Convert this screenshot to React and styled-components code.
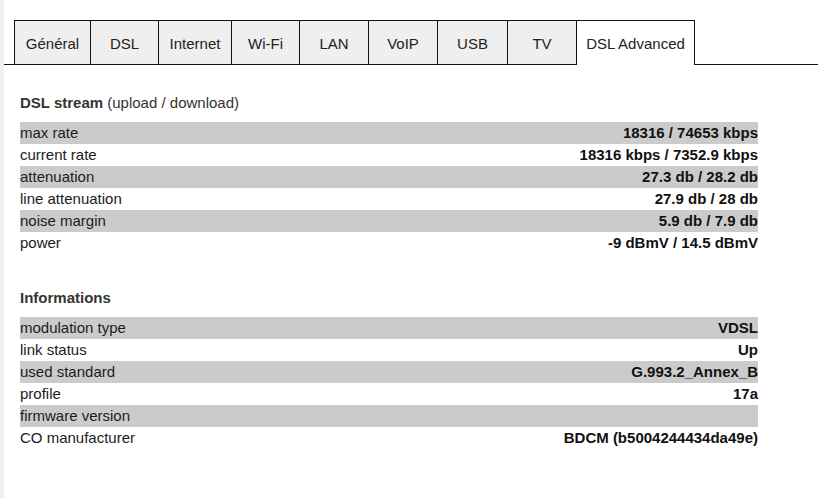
import React from 'react';
import styled, { createGlobalStyle } from 'styled-components';

const GlobalStyle = createGlobalStyle`
  body {
    margin: 0;
    background: #ffffff;
    font-family: "Liberation Sans", Arial, Helvetica, sans-serif;
    color: #1c1c1c;
  }
`;

const Page = styled.div`
  min-height: 499px;
  box-sizing: border-box;
  border-left: 4px solid #f1f1f1;
  padding-top: 20px;
`;

const TabBar = styled.div`
  display: flex;
  padding-left: 10px;
  border-bottom: 1px solid #111;
`;

const Tab = styled.div`
  box-sizing: border-box;
  width: ${(p) => p.w}px;
  height: ${(p) => (p.active ? '45px' : '44px')};
  margin-bottom: ${(p) => (p.active ? '-1px' : '0')};
  padding-top: 1px;
  display: flex;
  align-items: center;
  justify-content: center;
  border-top: 1px solid #111;
  border-right: 1px solid #111;
  border-left: ${(p) => (p.first ? '1px solid #111' : 'none')};
  background: ${(p) => (p.active ? '#ffffff' : '#efefef')};
  font-size: 15px;
  color: #222;
  white-space: nowrap;
`;

const Content = styled.div`
  width: 738px;
  padding-left: 16px;
`;

const Heading = styled.div`
  font-size: 15px;
  line-height: 18px;
  color: #333;
  margin: ${(p) => p.top}px 0 10px;

  b {
    font-weight: bold;
  }
`;

const Row = styled.div`
  display: flex;
  justify-content: space-between;
  height: 22px;
  line-height: 22px;
  font-size: 15px;
  background: ${(p) => (p.shaded ? '#cbcbcb' : 'transparent')};
`;

const Value = styled.span`
  font-weight: bold;
  color: #111;
`;

const tabs = [
  ['Général', 77],
  ['DSL', 68],
  ['Internet', 73],
  ['Wi-Fi', 68],
  ['LAN', 69],
  ['VoIP', 69],
  ['USB', 70],
  ['TV', 69],
  ['DSL Advanced', 118],
];

const stream = [
  ['max rate', '18316 / 74653 kbps'],
  ['current rate', '18316 kbps / 7352.9 kbps'],
  ['attenuation', '27.3 db / 28.2 db'],
  ['line attenuation', '27.9 db / 28 db'],
  ['noise margin', '5.9 db / 7.9 db'],
  ['power', '-9 dBmV / 14.5 dBmV'],
];

const infos = [
  ['modulation type', 'VDSL'],
  ['link status', 'Up'],
  ['used standard', 'G.993.2_Annex_B'],
  ['profile', '17a'],
  ['firmware version', ''],
  ['CO manufacturer', 'BDCM (b5004244434da49e)'],
];

function Table({ rows }) {
  return rows.map(([label, value], i) => (
    <Row key={label} shaded={i % 2 === 0}>
      <span>{label}</span>
      <Value>{value}</Value>
    </Row>
  ));
}

export default function App() {
  return (
    <Page>
      <GlobalStyle />
      <TabBar>
        {tabs.map(([t, w], i) => (
          <Tab key={t} w={w} first={i === 0} active={t === 'DSL Advanced'}>
            {t}
          </Tab>
        ))}
      </TabBar>
      <Content>
        <Heading top={29}>
          <b>DSL stream</b> (upload / download)
        </Heading>
        <Table rows={stream} />
        <Heading top={35}>
          <b>Informations</b>
        </Heading>
        <Table rows={infos} />
      </Content>
    </Page>
  );
}
